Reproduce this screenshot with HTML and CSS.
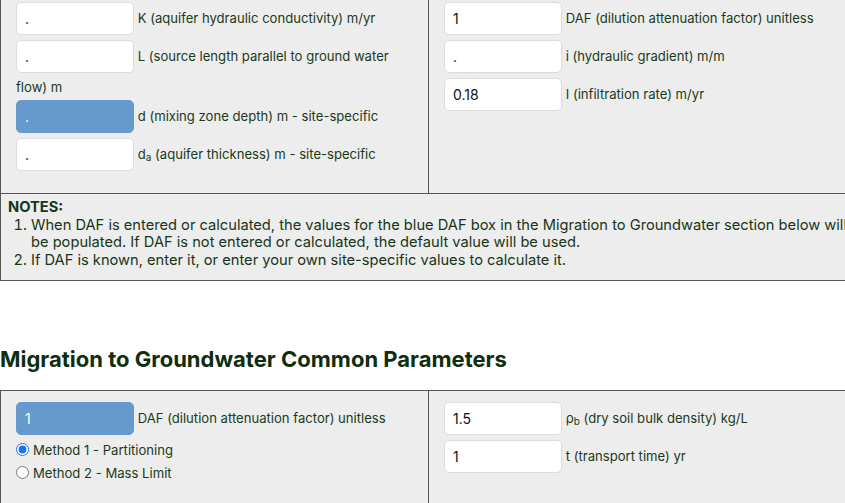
FILE: index.html
```html
<!DOCTYPE html>
<html lang="en">
<head>
<meta charset="utf-8">
<title>Migration to Groundwater</title>
<link rel="stylesheet" href="styles.css">
</head>
<body>
<div class="page">
  <div class="panel panel-top">
    <div class="col col-left">
      <div class="field"><input class="box" type="text" value="."> K (aquifer hydraulic conductivity) m/yr</div>
      <div class="field"><input class="box" type="text" value="."> L (source length parallel to ground water flow) m</div>
      <div class="field"><input class="box box-blue" type="text" value="."> d (mixing zone depth) m - site-specific</div>
      <div class="field"><input class="box" type="text" value="."> d<sub>a</sub> (aquifer thickness) m - site-specific</div>
    </div>
    <div class="col col-right">
      <div class="field"><input class="box" type="text" value="1"> DAF (dilution attenuation factor) unitless</div>
      <div class="field"><input class="box" type="text" value="."> i (hydraulic gradient) m/m</div>
      <div class="field"><input class="box" type="text" value="0.18"> I (infiltration rate) m/yr</div>
    </div>
  </div>

  <div class="notes">
    <div class="notes-title">NOTES:</div>
    <ol class="notes-list">
      <li>When DAF is entered or calculated, the values for the blue DAF box in the Migration to Groundwater section below will be populated. If DAF is not entered or calculated, the default value will be used.</li>
      <li>If DAF is known, enter it, or enter your own site-specific values to calculate it.</li>
    </ol>
  </div>

  <h2 class="section-title">Migration to Groundwater Common Parameters</h2>

  <div class="panel panel-bottom">
    <div class="col col-left">
      <div class="field"><input class="box box-blue" type="text" value="1"> DAF (dilution attenuation factor) unitless</div>
      <label class="radio"><input type="radio" name="method" checked> Method 1 - Partitioning</label>
      <label class="radio"><input type="radio" name="method"> Method 2 - Mass Limit</label>
    </div>
    <div class="col col-right">
      <div class="field"><input class="box" type="text" value="1.5"> ρ<sub>b</sub> (dry soil bulk density) kg/L</div>
      <div class="field"><input class="box" type="text" value="1"> t (transport time) yr</div>
    </div>
  </div>
</div>
</body>
</html>
```

FILE: styles.css
```css
html, body {
  margin: 0;
  padding: 0;
  background: #ffffff;
  overflow: hidden;
}

body {
  font-family: Inter, "Noto Sans", "Liberation Sans", sans-serif;
  color: #1a3a1a;
}

.page {
  width: 856px;
}

.panel {
  display: grid;
  grid-template-columns: 428px 428px;
  background: #ededed;
  border-left: 1px solid #555555;
}

.panel-top {
  border-bottom: 1px solid #555555;
}

.panel-bottom {
  border-top: 1px solid #555555;
  min-height: 130px;
}

.col {
  padding: 0 15px 0 15px;
}

.col-left {
  border-right: 1px solid #555555;
}

.panel-top .col {
  padding-top: 0;
  padding-bottom: 19px;
}

.panel-bottom .col {
  padding-top: 9px;
}

.field {
  font-size: 13.1px;
  line-height: 22px;
}

.field sub {
  font-size: 10px;
  line-height: 0;
  vertical-align: -2px;
}

.box {
  box-sizing: border-box;
  width: 118px;
  height: 33px;
  margin: 2px 0 3px 0;
  padding: 0 8px;
  vertical-align: middle;
  border: 1px solid #dcdcdc;
  border-radius: 5px;
  background: #ffffff;
  font-family: Inter, "Noto Sans", sans-serif;
  font-size: 14px;
  color: #111111;
  outline: none;
}

.box-blue {
  background: #6699cc;
  border-color: #6699cc;
  color: #ffffff;
}

.radio {
  display: flex;
  align-items: center;
  height: 23px;
  font-size: 13.1px;
  color: #1a3a1a;
}

.radio input {
  width: 13px;
  height: 13px;
  margin: 0 4px 0 0;
  accent-color: #1a73f0;
}

.notes {
  background: #ededed;
  border-left: 1px solid #555555;
  border-bottom: 1px solid #555555;
  padding: 5px 0 11px 7px;
  font-size: 14.67px;
  line-height: 17.5px;
  color: #173517;
}

.notes-title {
  font-weight: 700;
}

.notes-list {
  margin: 0;
  padding-left: 23px;
}

.section-title {
  margin: 66px 0 18px 0;
  font-size: 22px;
  font-weight: 700;
  line-height: 25px;
  color: #0e2e0e;
}
```
